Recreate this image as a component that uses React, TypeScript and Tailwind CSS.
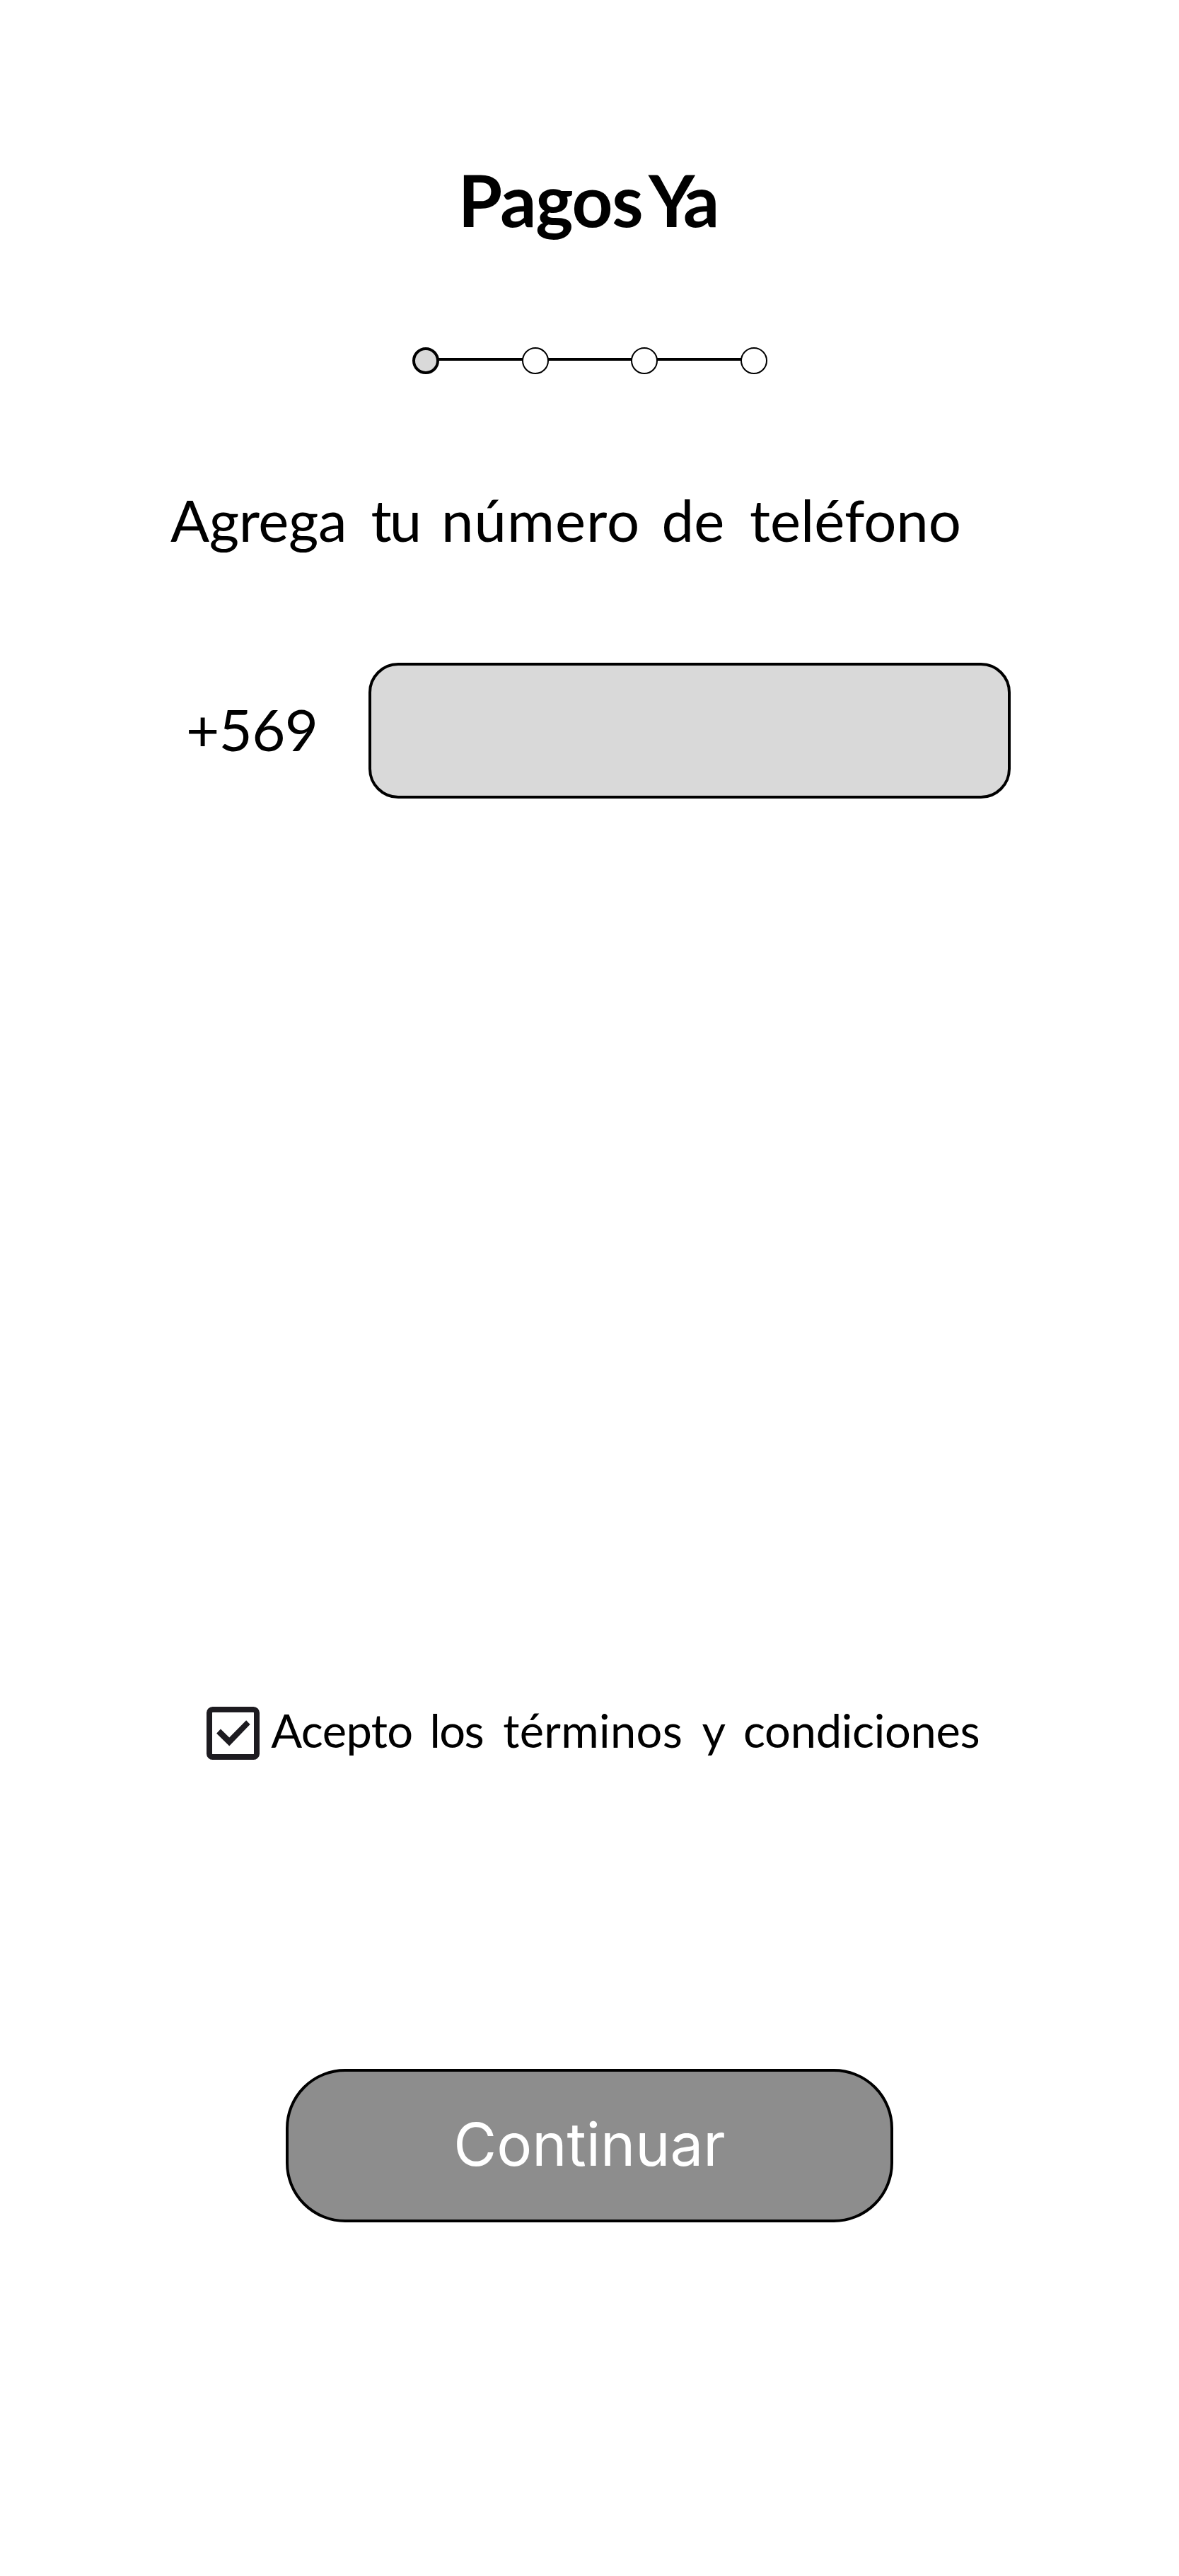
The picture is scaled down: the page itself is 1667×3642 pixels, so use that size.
import { Fragment } from "react";

function Steps() {
  return (
    <div className="mt-[149.3px] ml-[583.3px] flex h-[38px] items-start">
      {[0, 1, 2, 3].map((i) => (
        <Fragment key={i}>
          {i > 0 && <div className="mt-[15px] -mx-px h-1 w-[118.5px] shrink-0 bg-black" />}
          <div
            className={
              i === 0
                ? "z-10 size-[38px] shrink-0 rounded-full border-4 border-black bg-[#d9d9d9]"
                : "z-10 size-[38px] shrink-0 rounded-full border-2 border-black bg-white"
            }
          />
        </Fragment>
      ))}
    </div>
  );
}

export default function App() {
  return (
    <main className="flex h-[3642px] w-[1667px] flex-col overflow-hidden bg-white font-[Lato,sans-serif] text-black">
      <h1 className="mt-[222px] ml-[647.7px] flex h-[120px] text-[101px] leading-[120px] font-bold">
        <span className="w-[269.3px] shrink-0 tracking-[-1.3px]">Pagos</span>
        <span className="tracking-[-5px]">Ya</span>
      </h1>

      <Steps />

      <h2 className="mt-[156px] ml-[241px] flex h-[100px] text-[81.5px] leading-[100px]">
        <span className="w-[283.5px] shrink-0 tracking-[-0.4px]">Agrega</span>
        <span className="w-[99.5px] shrink-0 tracking-[-3px]">tu</span>
        <span className="w-[311.5px] shrink-0 tracking-[1px]">número</span>
        <span className="w-[124.5px] shrink-0">de</span>
        <span>teléfono</span>
      </h2>

      <div className="mt-[152px] ml-[263px] flex h-[192px] items-center">
        <label htmlFor="phone" className="w-[258px] shrink-0 pb-1 text-[81.5px] leading-[100px] tracking-[-0.7px]">
          +569
        </label>
        <input
          id="phone"
          type="tel"
          className="h-[192px] w-[908px] rounded-[42px] border-4 border-black bg-[#d9d9d9] px-10 text-[81.5px] outline-none"
        />
      </div>

      <div className="mt-[1283.3px] ml-[291.5px] flex h-[75.4px] items-center">
        <div className="size-[75.4px] shrink-0 rounded-[8.6px] border-[8.6px] border-[#1d1b20]">
          <svg viewBox="26 26 174 174" className="size-full" fill="#1d1b20">
            <path d="M44 113 61 95 97 130 167 59 183 76 97 165Z" />
          </svg>
        </div>
        <p className="ml-[16.4px] flex pb-[9px] text-[65px] leading-[80px]">
          <span className="w-[224.1px] shrink-0 tracking-[-0.6px]">Acepto</span>
          <span className="w-[103.9px] shrink-0 tracking-[-1.5px]">los</span>
          <span className="w-[281.2px] shrink-0 tracking-[0.3px]">términos</span>
          <span className="w-[58.5px] shrink-0">y</span>
          <span className="tracking-[-0.3px]">condiciones</span>
        </p>
      </div>

      <button className="mt-[437px] ml-[404px] h-[217px] w-[859px] rounded-[84px] border-4 border-black bg-[#8d8d8d] pb-0.5 text-center font-[Inter,sans-serif] text-[83.4px] leading-[100px] text-white">
        Continuar
      </button>
    </main>
  );
}
